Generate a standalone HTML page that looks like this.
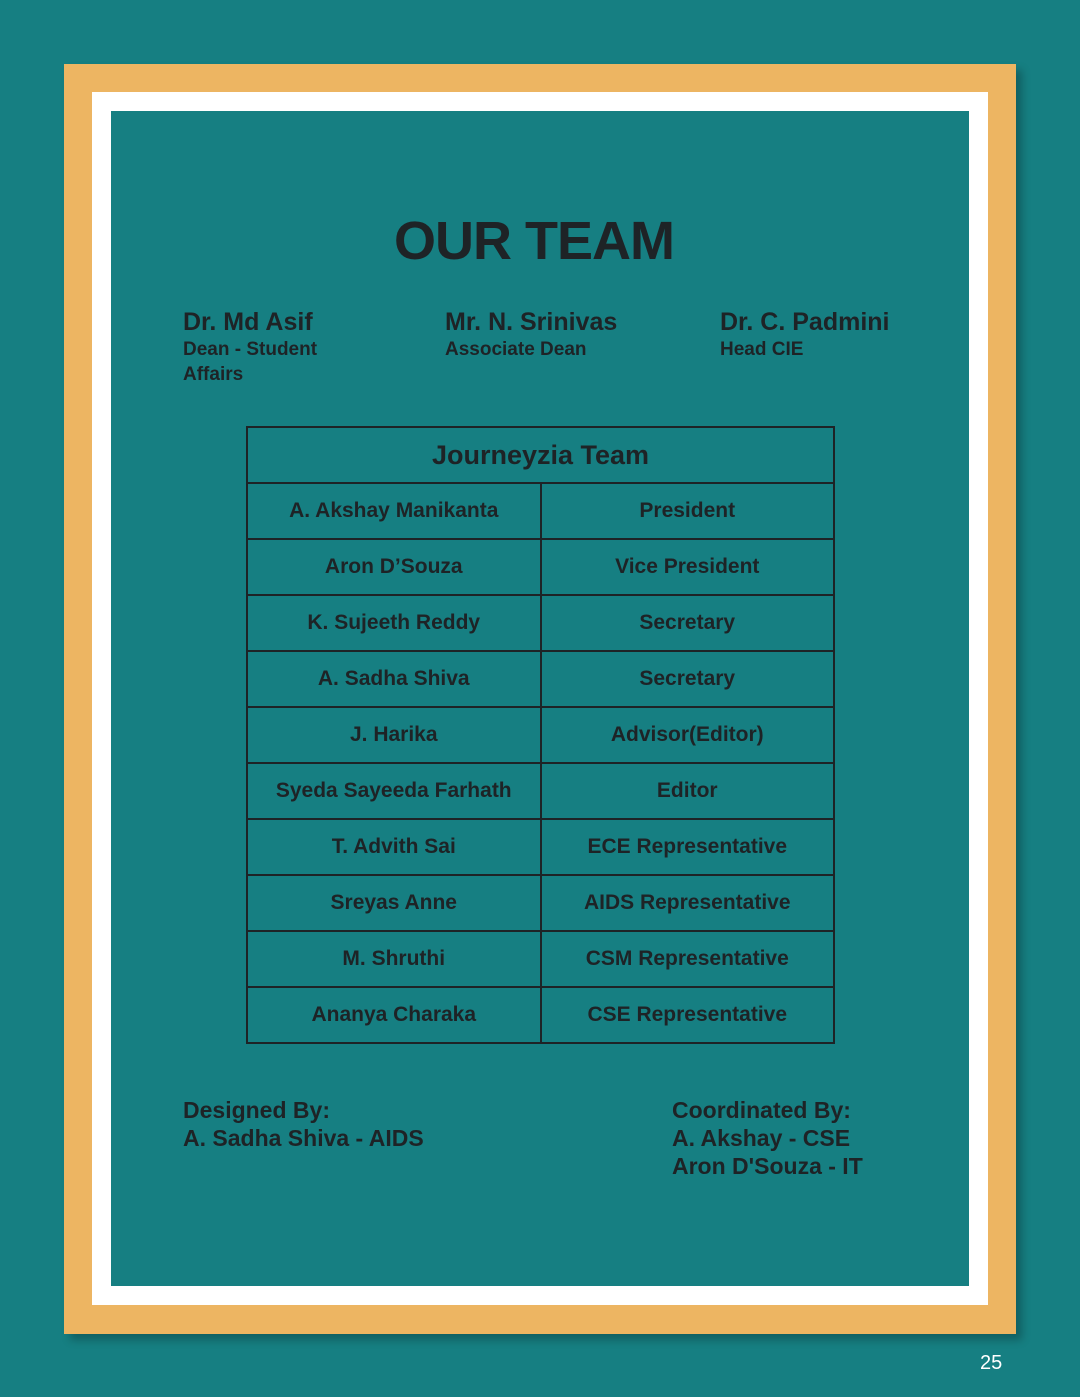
<!DOCTYPE html>
<html><head><style>
body{margin:0;width:1080px;height:1397px;background:#167f82;position:relative;overflow:hidden;font-family:"Liberation Sans",sans-serif;color:#1e2326}
.o{position:absolute;left:64px;top:64px;width:952px;height:1270px;background:#edb562;box-shadow:6px 6px 8px rgba(0,0,0,.25)}
.w{position:absolute;left:92px;top:92px;width:896px;height:1213px;background:#fff}
.t{position:absolute;left:111px;top:111px;width:858px;height:1175px;background:#167f82}
.a{position:absolute;font-weight:bold}
h1{position:absolute;left:0;width:1068px;top:210px;margin:0;text-align:center;font-size:54px;font-weight:900;letter-spacing:-1px}
.n{font-size:25px}.r{font-size:19px;line-height:25px}
table{position:absolute;left:246px;top:426px;width:589px;border-collapse:collapse;font-weight:bold}
td{border:2px solid #1e2326;height:54px;text-align:center;font-size:21px;width:50%;padding:0}
th{border:2px solid #1e2326;height:52px;font-size:27px}
.f{font-size:23px;line-height:28px;font-weight:bold}
</style></head><body>
<div class="o"></div><div class="w"></div><div class="t"></div>
<h1>OUR TEAM</h1>
<div class="a" style="left:183px;top:308px"><div class="n">Dr. Md Asif</div><div class="r">Dean - Student<br>Affairs</div></div>
<div class="a" style="left:445px;top:308px"><div class="n">Mr. N. Srinivas</div><div class="r">Associate Dean</div></div>
<div class="a" style="left:720px;top:308px"><div class="n">Dr. C. Padmini</div><div class="r">Head CIE</div></div>
<table>
<tr><th colspan="2">Journeyzia Team</th></tr>
<tr><td>A. Akshay Manikanta</td><td>President</td></tr>
<tr><td>Aron D’Souza</td><td>Vice President</td></tr>
<tr><td>K. Sujeeth Reddy</td><td>Secretary</td></tr>
<tr><td>A. Sadha Shiva</td><td>Secretary</td></tr>
<tr><td>J. Harika</td><td>Advisor(Editor)</td></tr>
<tr><td>Syeda Sayeeda Farhath</td><td>Editor</td></tr>
<tr><td>T. Advith Sai</td><td>ECE Representative</td></tr>
<tr><td>Sreyas Anne</td><td>AIDS Representative</td></tr>
<tr><td>M. Shruthi</td><td>CSM Representative</td></tr>
<tr><td>Ananya Charaka</td><td>CSE Representative</td></tr>
</table>
<div class="a f" style="left:183px;top:1096px">Designed By:<br>A. Sadha Shiva - AIDS</div>
<div class="a f" style="left:672px;top:1096px">Coordinated By:<br>A. Akshay - CSE<br>Aron D'Souza - IT</div>
<div style="position:absolute;left:980px;top:1352px;color:#fff;font-size:20px">25</div>
</body></html>
